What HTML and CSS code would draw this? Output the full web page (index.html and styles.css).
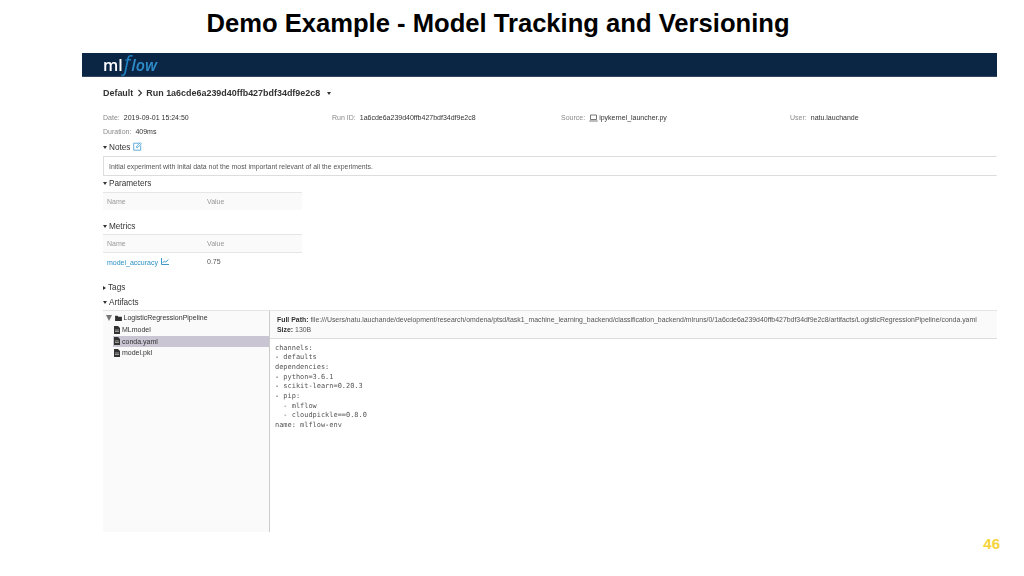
FILE: index.html
```html
<!DOCTYPE html>
<html lang="en">
<head>
<meta charset="utf-8">
<title>Demo Example - Model Tracking and Versioning</title>
<link rel="stylesheet" href="styles.css">
</head>
<body>
<main class="slide">
  <h1 class="title">Demo Example - Model Tracking and Versioning</h1>
  <section class="shot">
    <header class="nav">
      <div class="logo"><span class="ml">ml</span><span class="flow-f">f</span><span class="flow">low</span></div>
    </header>
    <div class="content">
      <div class="crumb"><span>Default</span><svg class="chev" viewBox="0 0 6 8"><path d="M1.5 1l3 3-3 3" fill="none" stroke="#333" stroke-width="1.1"/></svg><span>Run 1a6cde6a239d40ffb427bdf34df9e2c8</span><span class="tri-down crumb-tri"></span></div>
      <div class="meta">
        <div><span class="k">Date:</span>2019-09-01 15:24:50</div>
        <div><span class="k">Run ID:</span>1a6cde6a239d40ffb427bdf34df9e2c8</div>
        <div class="source"><span class="k">Source:</span><svg class="laptop" viewBox="0 0 9 8"><path d="M1.5 1h6v4.5h-6zM.3 7h8.4" fill="none" stroke="#555" stroke-width=".8"/></svg>ipykernel_launcher.py</div>
        <div><span class="k">User:</span>natu.lauchande</div>
      </div>
      <div class="duration"><span class="k">Duration:</span>409ms</div>
      <div class="sec notes-head"><span class="tri-down"></span>Notes<svg class="edit" viewBox="0 0 9 9"><path d="M6.5 1.2H.7v7h7V3.5M3.5 5.6l.3-1.5L7.3.6l1.1 1.1L5 5.3z" fill="none" stroke="#3f9bd1" stroke-width=".8"/></svg></div>
      <div class="note">Initial experiment with inital data not the most important relevant of all the experiments.</div>
      <div class="sec params-head"><span class="tri-down"></span>Parameters</div>
      <div class="tbl"><div class="thead"><span>Name</span><span>Value</span></div></div>
      <div class="sec metrics-head"><span class="tri-down"></span>Metrics</div>
      <div class="tbl metrics-tbl">
        <div class="thead"><span>Name</span><span>Value</span></div>
        <div class="trow"><span class="metric">model_accuracy<svg class="chart" viewBox="0 0 8 7"><path d="M.5 0v6.5H8M1.5 5l2-2 1.3 1.2L7.3 1.5" fill="none" stroke="#2b8fc4" stroke-width=".9"/></svg></span><span>0.75</span></div>
      </div>
      <div class="sec tags-head"><span class="tri-right"></span>Tags</div>
      <div class="sec artifacts-head"><span class="tri-down"></span>Artifacts</div>
      <div class="browser">
        <aside class="tree">
          <div class="node root"><span class="tree-tri"></span><svg class="folder" viewBox="0 0 8 7"><path d="M0 1h3l.8 1H8v5H0z" fill="#333"/></svg>LogisticRegressionPipeline</div>
          <div class="node leaf"><svg class="file" viewBox="0 0 6 8"><path d="M0 0h4l2 2v6H0z" fill="#333"/><path d="M1 4h4M1 5.5h4" stroke="#ddd" stroke-width=".6"/></svg>MLmodel</div>
          <div class="node leaf selected"><svg class="file" viewBox="0 0 6 8"><path d="M0 0h4l2 2v6H0z" fill="#333"/><path d="M1 4h4M1 5.5h4" stroke="#ddd" stroke-width=".6"/></svg>conda.yaml</div>
          <div class="node leaf"><svg class="file" viewBox="0 0 6 8"><path d="M0 0h4l2 2v6H0z" fill="#333"/><path d="M1 4h4M1 5.5h4" stroke="#ddd" stroke-width=".6"/></svg>model.pkl</div>
        </aside>
        <div class="viewer">
          <div class="path">
            <div><b>Full Path:</b> file:///Users/natu.lauchande/development/research/omdena/ptsd/task1_machine_learning_backend/classification_backend/mlruns/0/1a6cde6a239d40ffb427bdf34df9e2c8/artifacts/LogisticRegressionPipeline/conda.yaml</div>
            <div><b>Size:</b> 130B</div>
          </div>
<pre class="code">channels:
- defaults
dependencies:
- python=3.6.1
- scikit-learn=0.20.3
- pip:
  - mlflow
  - cloudpickle==0.8.0
name: mlflow-env</pre>
        </div>
      </div>
    </div>
  </section>
  <div class="page">46</div>
</main>
</body>
</html>
```
FILE: styles.css
```css
* { box-sizing: border-box; }
html, body { margin: 0; padding: 0; background: #fff; }
body { width: 1024px; height: 576px; overflow: hidden; font-family: "Liberation Sans", Arial, sans-serif; }
.slide { position: relative; width: 1024px; height: 576px; }
.title { margin: 0; height: 53px; padding: 9px 28px 0 0; text-align: center; font-size: 25.6px; line-height: 29px; font-weight: 700; color: #000; white-space: nowrap; }
.shot { margin-left: 82px; width: 915px; filter: blur(.4px); color: #333; font-size: 7px; }
.nav { height: 24px; background: #0b2545; display: flex; align-items: center; padding: 0 0 2px 21px; border-bottom: 1px solid #33465f; }
.logo { font-size: 16px; line-height: 20px; display: flex; align-items: baseline; font-family: "Open Sans", sans-serif; }
.ml { color: #fff; font-weight: 600; margin-right: 1px; }
.flow-f { color: #1f82c4; font-size: 21px; line-height: 20px; font-style: italic; margin-right: 1px; }
.flow { color: #2f8ecb; font-style: italic; font-weight: 600; }
.content { padding-left: 21px; }
.crumb { height: 16px; margin-top: 8px; display: flex; align-items: center; font-size: 8.95px; font-weight: 700; color: #333; }
.chev { width: 6px; height: 8px; margin: 0 3px 0 4px; }
.tri-down { display: inline-block; width: 0; height: 0; border: 2.5px solid transparent; border-top: 3px solid #333; border-bottom: 0; margin-right: 2px; vertical-align: 1px; }
.crumb-tri { margin-left: 7px; }
.tri-right { display: inline-block; width: 0; height: 0; border: 2.5px solid transparent; border-left: 3px solid #333; border-right: 0; margin-right: 2px; vertical-align: 0; }
.meta { display: grid; grid-template-columns: repeat(4, 229px); margin-top: 12px; height: 10px; line-height: 10px; color: #333; white-space: nowrap; }
.k { color: #8a8a8a; margin-right: 4px; }
.source { display: flex; align-items: center; }
.laptop { width: 9px; height: 8px; margin-right: 1px; }
.duration { margin-top: 4px; height: 10px; line-height: 10px; }
.sec { font-size: 8.2px; line-height: 10px; height: 10px; color: #333; display: block; }
.notes-head { margin-top: 5px; }
.edit { width: 9px; height: 9px; margin-left: 3px; vertical-align: -1.5px; }
.note { margin-top: 4px; height: 20px; line-height: 19px; border: 1px solid #ddd; border-right: 0; padding-left: 5px; font-size: 6.9px; color: #555; border-radius: 1px; }
.params-head { margin-top: 3px; }
.tbl { width: 199px; margin-top: 3px; border-top: 1px solid #e6e6e6; }
.metrics-tbl { margin-top: 2px; }
.thead { height: 17px; background: #fafafa; display: grid; grid-template-columns: 100px 1fr; align-items: center; padding-left: 4px; color: #999; }
.trow { height: 18px; display: grid; grid-template-columns: 100px 1fr; align-items: center; padding-left: 4px; border-top: 1px solid #e6e6e6; color: #555; }
.metric { color: #2b8fc4; }
.chart { width: 8px; height: 7px; margin-left: 3px; }
.metrics-head { margin-top: 12px; }
.tags-head { margin-top: 13px; }
.artifacts-head { margin-top: 5px; }
.browser { display: flex; height: 222px; margin-top: 2px; border-top: 1px solid #e4e4e4; }
.tree { width: 167px; background: #fafafa; border-right: 1px solid #ccc; color: #333; flex: none; padding-top: 1px; }
.node { height: 11.8px; line-height: 11.8px; display: flex; align-items: center; white-space: nowrap; }
.root { padding-left: 3px; }
.tree-tri { width: 0; height: 0; border: 3.5px solid transparent; border-top: 6px solid #777; border-bottom: 0; margin-right: 2.5px; }
.folder { width: 7px; height: 6px; margin-right: 2px; }
.leaf { padding-left: 11px; }
.file { width: 6px; height: 8px; margin-right: 2px; flex: none; }
.selected { background: #c9c5d3; margin-left: 10px; padding-left: 1px; }
.viewer { flex: 1; min-width: 0; }
.path { height: 28px; background: #fafafa; padding: 4px 0 0 7px; border-bottom: 1px solid #ddd; line-height: 10px; font-size: 6.91px; color: #555; white-space: nowrap; overflow: hidden; }
.path b { font-weight: 700; color: #333; }
.code { margin: 0; padding: 4.5px 0 0 5px; font-family: "DejaVu Sans Mono", monospace; font-size: 6.95px; line-height: 9.7px; color: #555; }
.page { position: absolute; right: 24px; bottom: 24px; font-size: 15px; line-height: 16px; font-weight: 700; color: #f5d33a; }
```
